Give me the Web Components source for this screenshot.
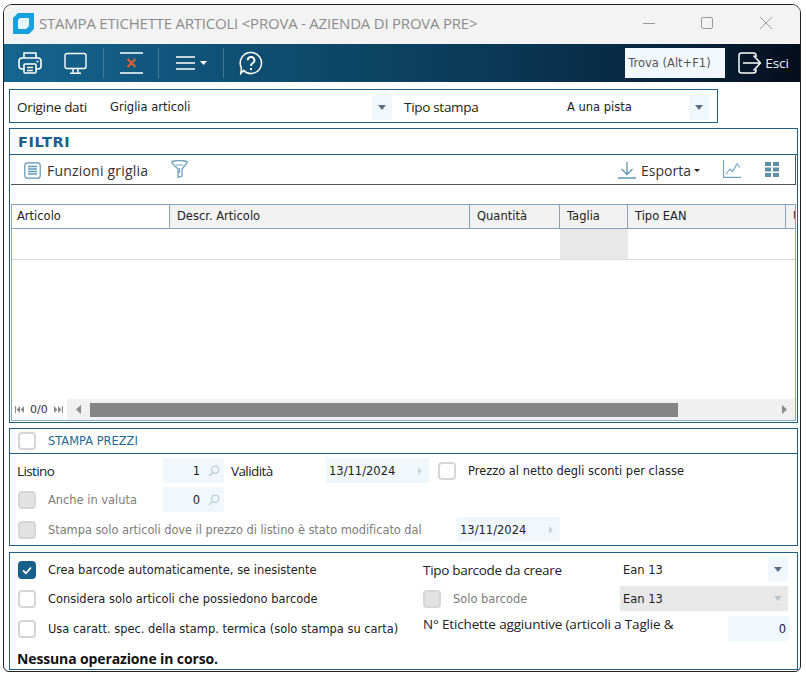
<!DOCTYPE html>
<html>
<head>
<meta charset="utf-8">
<title>Stampa etichette articoli</title>
<style>
  html, body { margin: 0; height: 100%; overflow: hidden; background: #fff; }
  body { font-family: "Open Sans", "Liberation Sans", sans-serif; }
</style>
</head>
<body>
<app-window>
  <title-bar slot="head" text="STAMPA ETICHETTE ARTICOLI <PROVA - AZIENDA DI PROVA PRE>"></title-bar>
  <main-toolbar slot="head"></main-toolbar>

  <group-box style="width:709px;height:34px;padding:6px 0 0 0">
    <form-row h="22">
      <form-label w="97" pad="7">Origine dati</form-label>
      <form-field w="285" arrow="drop">Griglia articoli</form-field>
      <form-label w="172" pad="12">Tipo stampa</form-label>
      <form-field w="145" arrow="drop">A una pista</form-field>
    </form-row>
  </group-box>

  <group-box heading="FILTRI" style="height:295px">
    <grid-toolbar></grid-toolbar>
    <data-grid></data-grid>
  </group-box>

  <group-box check-heading="STAMPA PREZZI" style="height:118px">
    <form-row h="25" top="4">
      <form-label w="153" pad="7" style="letter-spacing:-0.6px">Listino</form-label>
      <form-field w="61" align="right" arrow="search">1</form-field>
      <form-label w="102" pad="7" style="letter-spacing:-0.6px">Validità</form-label>
      <form-field w="103" arrow="next">13/11/2024</form-field>
      <check-field left="9">Prezzo al netto degli sconti per classe</check-field>
    </form-row>
    <form-row h="25" top="4">
      <check-field left="8" w="145" disabled>Anche in valuta</check-field>
      <form-field w="61" align="right" arrow="search">0</form-field>
    </form-row>
    <form-row h="25" top="5">
      <check-field left="8" w="439" disabled style="letter-spacing:-0.05px">Stampa solo articoli dove il prezzo di listino è stato modificato dal</check-field>
      <form-field w="103" arrow="next">13/11/2024</form-field>
    </form-row>
  </group-box>

  <group-box style="height:118px;padding-top:4px">
    <form-row h="25">
      <check-field left="8" w="405" checked>Crea barcode automaticamente, se inesistente</check-field>
      <form-label w="197">Tipo barcode da creare</form-label>
      <form-field w="168" arrow="drop">Ean 13</form-field>
    </form-row>
    <form-row h="25" top="4">
      <check-field left="8" w="405">Considera solo articoli che possiedono barcode</check-field>
      <check-field w="197" disabled>Solo barcode</check-field>
      <form-field w="168" arrow="drop-off" off>Ean 13</form-field>
    </form-row>
    <form-row h="25" top="5">
      <check-field left="8" w="405">Usa caratt. spec. della stamp. termica (solo stampa su carta)</check-field>
      <form-label w="305" up="10" style="letter-spacing:-0.16px">N° Etichette aggiuntive (articoli a Taglie &amp;</form-label>
      <form-field w="61" align="right">0</form-field>
    </form-row>
    <status-line>Nessuna operazione in corso.</status-line>
  </group-box>
</app-window>

<script>
const SEGOE = '"Open Sans", "Noto Sans", sans-serif';
const TAHOMA = '"DejaVu Sans", sans-serif';

class AppWindow extends HTMLElement {
  constructor() {
    super();
    this.attachShadow({ mode: "open" });
    this.shadowRoot.innerHTML = `
      <style>
        :host {
          display: flex;
          flex-direction: column;
          box-sizing: border-box;
          margin: 4px 0 0 3px;
          width: 798px;
          height: 668px;
          border: 1px solid #222;
          border-radius: 9px 9px 6px 6px;
          overflow: hidden;
          background: #fff;
        }
        .body {
          display: flex;
          flex-direction: column;
          gap: 5px;
          padding: 7px 1px 0 5px;
        }
        ::slotted(group-box:last-child) { margin-top: 1px; }
      </style>
      <slot name="head"></slot>
      <div class="body"><slot></slot></div>
    `;
  }
}

class TitleBar extends HTMLElement {
  constructor() {
    super();
    this.attachShadow({ mode: "open" });
  }

  connectedCallback() {
    const text = this.getAttribute("text").replace(/</g, "&lt;").replace(/>/g, "&gt;");
    this.shadowRoot.innerHTML = `
      <style>
        :host {
          display: flex;
          align-items: center;
          box-sizing: border-box;
          height: 39px;
          background: #f3f3f3;
          padding: 0 0 3px 9px;
          font: 15px ${SEGOE};
          color: #8c8c8c;
        }
        .text { margin-left: 5px; flex: 1; white-space: nowrap; letter-spacing: -0.22px; }
        svg { display: block; flex: none; }
        .ctl { width: 58.5px; display: flex; justify-content: center; }
      </style>
      <svg width="21" height="21" viewBox="0 0 21 21">
        <path d="M5 0H21V16L16 21H0V5Z" fill="#17a0dd"/>
        <path d="M7 5H15Q16 5 16 6V13L13 16H6Q5 16 5 15V7Z" fill="#e8f6fd"/>
      </svg>
      <span class="text">${text}</span>
      <span class="ctl"><svg width="14" height="14" viewBox="0 0 14 14"><path d="M1 7.5H13" stroke="#9a9a9a"/></svg></span>
      <span class="ctl"><svg width="14" height="14" viewBox="0 0 14 14"><rect x="1.5" y="1.5" width="11" height="11" rx="1.5" fill="none" stroke="#9a9a9a"/></svg></span>
      <span class="ctl" style="margin-right:5px"><svg width="14" height="14" viewBox="0 0 14 14"><path d="M1 1L13 13M13 1L1 13" stroke="#9a9a9a"/></svg></span>
    `;
  }
}

class MainToolbar extends HTMLElement {
  constructor() {
    super();
    this.attachShadow({ mode: "open" });
    this.shadowRoot.innerHTML = `
      <style>
        :host {
          display: flex;
          align-items: center;
          height: 38px;
          padding-left: 14px;
          background: linear-gradient(90deg, #15658f 0%, #0f4f73 30%, #0a3a57 60%, #08233b 85%, #050d1c 100%);
          color: #fff;
        }
        svg { display: block; flex: none; }
        .sep { width: 1px; height: 30px; background: #3f7c9c; flex: none; }
        .find {
          margin-left: auto;
          box-sizing: border-box;
          width: 100px;
          height: 30px;
          background: #f2f9fe;
          color: #555;
          font: 11.5px/30px ${TAHOMA};
          padding-left: 3px;
          white-space: nowrap;
        }
        .esci { font: 13.5px ${SEGOE}; margin: 0 11px 0 4px; color: #f2f6f8; }
      </style>
      <svg width="24" height="24" viewBox="0 0 24 24" fill="none" stroke="#fff" stroke-width="1.6">
        <path d="M6 7V2H18V7"/>
        <rect x="1" y="7" width="22" height="11" rx="3"/>
        <rect x="6" y="13" width="12" height="9" rx="1" fill="#13597e"/>
        <path d="M9 16.5H15M9 19.5H15" stroke-width="1.4"/>
        <path d="M18.5 10.5H20.5" stroke-width="1.4"/>
      </svg>
      <svg style="margin-left:22px" width="23" height="23" viewBox="0 0 23 23" fill="none" stroke="#fff" stroke-width="1.4">
        <rect x="1" y="1.5" width="21" height="15" rx="2"/>
        <path d="M9 17V21M14 17V21M6 21.2H17"/>
      </svg>
      <span class="sep" style="margin-left:16px"></span>
      <svg style="margin-left:16px" width="23" height="24" viewBox="0 0 23 24" fill="none">
        <path d="M0 2H23M0 22H23" stroke="#fff" stroke-width="1.4"/>
        <path d="M7.5 8L15.5 16M15.5 8L7.5 16" stroke="#e2612c" stroke-width="1.8"/>
      </svg>
      <span class="sep" style="margin-left:15px"></span>
      <svg style="margin-left:17px" width="32" height="16" viewBox="0 0 32 16" fill="none">
        <path d="M0 2H19M0 8H19M0 14H19" stroke="#fff" stroke-width="1.4"/>
        <path d="M24 6H31L27.5 10Z" fill="#fff"/>
      </svg>
      <span class="sep" style="margin-left:15px"></span>
      <svg style="margin-left:15px" width="24" height="24" viewBox="0 0 24 24" fill="none" stroke="#fff" stroke-width="1.5">
        <path d="M12 1.5A10.5 10.5 0 1 1 4.5 19.4L1.8 22.4L2.4 16.8A10.5 10.5 0 0 1 12 1.5Z"/>
        <path d="M8.8 9.3A3.3 3.3 0 1 1 13.6 12.2C12.4 12.9 12 13.5 12 15" stroke-width="1.9"/>
        <path d="M12 17V19" stroke-width="1.9"/>
      </svg>
      <div class="find">Trova (Alt+F1)</div>
      <svg style="margin-left:13px" width="23" height="22" viewBox="0 0 23 22" fill="none" stroke="#fff" stroke-width="1.5">
        <path d="M18 5V3.5Q18 1 15.5 1H3.5Q1 1 1 3.5V18.5Q1 21 3.5 21H15.5Q18 21 18 18.5V17"/>
        <path d="M5 11H22M15.5 3.5L22.5 11L15.5 18.5"/>
      </svg>
      <span class="esci">Esci</span>
    `;
  }
}

class GroupBox extends HTMLElement {
  constructor() {
    super();
    this.attachShadow({ mode: "open" });
  }

  connectedCallback() {
    const heading = this.getAttribute("heading");
    const checkHeading = this.getAttribute("check-heading");
    let head = "";
    if (heading) head = `<div class="head big">${heading}</div>`;
    if (checkHeading) {
      head = `<div class="head small"><check-field left="8" label-color="#1f6a8f">${checkHeading}</check-field></div>`;
    }
    this.shadowRoot.innerHTML = `
      <style>
        :host {
          display: block;
          box-sizing: border-box;
          width: 789px;
          border: 1px solid #1f5f7f;
        }
        .head { box-sizing: border-box; border-bottom: 1px solid #1f5f7f; }
        .big {
          height: 26px;
          font: bold 14.5px/26px ${TAHOMA};
          letter-spacing: 0.6px;
          color: #1a6088;
          padding-left: 8px;
        }
        .small { display: flex; align-items: center; height: 25px; }
      </style>
      ${head}
      <slot></slot>
    `;
  }
}

class FormRow extends HTMLElement {
  constructor() {
    super();
    this.attachShadow({ mode: "open" });
    this.shadowRoot.innerHTML = `
      <style>
        :host { display: flex; align-items: center; }
      </style>
      <slot></slot>
    `;
  }

  connectedCallback() {
    this.style.height = this.getAttribute("h") + "px";
    this.style.marginTop = (this.getAttribute("top") || 0) + "px";
  }
}

class FormLabel extends HTMLElement {
  constructor() {
    super();
    this.attachShadow({ mode: "open" });
    this.shadowRoot.innerHTML = `
      <style>
        :host {
          display: block;
          flex: none;
          box-sizing: border-box;
          font: 13.5px ${SEGOE};
          letter-spacing: -0.3px;
          color: #222;
          white-space: nowrap;
        }
      </style>
      <slot></slot>
    `;
  }

  connectedCallback() {
    this.style.width = this.getAttribute("w") + "px";
    this.style.paddingLeft = (this.getAttribute("pad") || 0) + "px";
    if (this.hasAttribute("up")) this.style.marginBottom = this.getAttribute("up") + "px";
  }
}

const ARROWS = {
  search: `<svg class="ico" style="right:4px" width="12" height="12" viewBox="0 0 12 12" fill="none" stroke="#b9c6d0" stroke-width="1.1"><circle cx="7.2" cy="4.8" r="3.6"/><path d="M4.5 7.5L1 11"/></svg>`,
  next: `<svg class="ico" style="right:7px" width="4" height="8" viewBox="0 0 4 8"><path d="M0 0L4 4L0 8Z" fill="#c9d3da"/></svg>`,
  drop: `<span class="btn"><svg width="8" height="5" viewBox="0 0 8 5"><path d="M0 0H8L4 5Z" fill="#5b6f80"/></svg></span>`,
  "drop-off": `<span class="btn off"><svg width="8" height="5" viewBox="0 0 8 5"><path d="M0 0H8L4 5Z" fill="#bcc4ca"/></svg></span>`,
};

class FormField extends HTMLElement {
  constructor() {
    super();
    this.attachShadow({ mode: "open" });
  }

  connectedCallback() {
    const arrow = this.getAttribute("arrow");
    const right = this.getAttribute("align") === "right";
    const dropdown = arrow && arrow.startsWith("drop");
    const off = this.hasAttribute("off");
    let padRight = 3;
    if (arrow === "search") padRight = 24;
    this.style.width = this.getAttribute("w") + "px";
    this.shadowRoot.innerHTML = `
      <style>
        :host {
          display: flex;
          flex: none;
          position: relative;
          box-sizing: border-box;
          height: 25px;
          align-items: center;
          justify-content: ${right ? "flex-end" : "flex-start"};
          background: ${off ? "#e8e8e8" : dropdown ? "transparent" : "#f0f8fe"};
          font: 11.5px ${TAHOMA};
          color: #222;
          padding: 0 ${padRight}px 0 3px;
          white-space: nowrap;
        }
        .ico { position: absolute; top: 50%; transform: translateY(-50%); display: block; }
        .btn {
          position: absolute;
          right: 0;
          top: 0;
          bottom: 0;
          width: 20px;
          display: flex;
          align-items: center;
          justify-content: center;
          background: #f0f8fe;
        }
        .btn.off { background: transparent; }
      </style>
      <slot></slot>
      ${arrow ? ARROWS[arrow] : ""}
    `;
  }
}

class CheckField extends HTMLElement {
  constructor() {
    super();
    this.attachShadow({ mode: "open" });
  }

  connectedCallback() {
    const checked = this.hasAttribute("checked");
    const disabled = this.hasAttribute("disabled");
    const w = this.getAttribute("w");
    if (w) this.style.width = w + "px";
    this.style.marginLeft = (this.getAttribute("left") || 0) + "px";
    const tick = checked
      ? `<svg width="18" height="18" viewBox="0 0 18 18"><path d="M5 9.5L8 12.2L13 6.5" fill="none" stroke="#fff" stroke-width="1.7"/></svg>`
      : "";
    this.shadowRoot.innerHTML = `
      <style>
        :host {
          display: flex;
          flex: none;
          align-items: center;
          box-sizing: border-box;
          white-space: nowrap;
          font: 11.44px ${TAHOMA};
          color: ${this.getAttribute("label-color") || (disabled ? "#7d7d7d" : "#222")};
        }
        .box {
          flex: none;
          box-sizing: border-box;
          width: 18px;
          height: 18px;
          margin-right: 12px;
          border-radius: 4px;
          border: 2px solid ${checked ? "#17608a" : "#d6d6d6"};
          background: ${checked ? "#17608a" : disabled ? "#e2e2e2" : "#fff"};
          position: relative;
        }
        svg { position: absolute; left: -2px; top: -2px; display: block; }
      </style>
      <span class="box">${tick}</span>
      <slot></slot>
    `;
  }
}

class StatusLine extends HTMLElement {
  constructor() {
    super();
    this.attachShadow({ mode: "open" });
    this.shadowRoot.innerHTML = `
      <style>
        :host {
          display: block;
          margin: 10px 0 0 7px;
          font: bold 14px/16px ${SEGOE};
          letter-spacing: -0.13px;
          color: #111;
          white-space: nowrap;
        }
      </style>
      <slot></slot>
    `;
  }
}

class GridToolbar extends HTMLElement {
  constructor() {
    super();
    this.attachShadow({ mode: "open" });
    this.shadowRoot.innerHTML = `
      <style>
        :host {
          display: flex;
          align-items: center;
          box-sizing: border-box;
          height: 30px;
          margin: 0 1px 0 1px;
          border-right: 1px solid #555;
          border-bottom: 1px solid #555;
          font: 14px ${SEGOE};
          letter-spacing: 0.2px;
          color: #333;
          padding-top: 1px;
        }
        svg { display: block; flex: none; }
        .caret { width: 0; height: 0; border: 3px solid transparent; border-top: 3px solid #222; border-bottom: 0; margin-left: 3px; }
      </style>
      <svg style="margin-left:13px" width="17" height="17" viewBox="0 0 17 17" fill="none" stroke="#5f97b3" stroke-width="1.2">
        <rect x="0.8" y="0.8" width="15.4" height="15.4" rx="2.5"/>
        <path d="M4 4.5H13M4 7H13M4 9.5H13M4 12H13" stroke-width="1.4"/>
      </svg>
      <span style="margin-left:6px">Funzioni griglia</span>
      <svg style="margin-left:23px;margin-top:-3px" width="17" height="18" viewBox="0 0 17 18" fill="none" stroke="#6fa3bd" stroke-width="1.3">
        <path d="M1 1.5Q8.5 -0.5 16 1.5V3L11 9V16L7 17.5V9L1 3Z"/>
        <path d="M5 5H12M8.5 8V13" stroke-width="1.2"/>
      </svg>
      <svg style="margin-left:auto" width="18" height="17" viewBox="0 0 18 17" fill="none" stroke="#5f97b3" stroke-width="1.3">
        <path d="M9 0V12M3.5 7L9 12.5L14.5 7M0 16H18"/>
      </svg>
      <span style="margin-left:5px;letter-spacing:0">Esporta</span>
      <span class="caret"></span>
      <svg style="margin-left:23px;margin-top:-2px" width="18" height="18" viewBox="0 0 18 18" fill="none" stroke="#6fa3bd" stroke-width="1.1">
        <path d="M0.6 0V17.4H18"/>
        <path d="M3 14L7 9L9.5 11.5L14 4L17 7.5"/>
      </svg>
      <svg style="margin:-2px 16px 0 24px" width="14" height="15" viewBox="0 0 14 15" fill="#5f8fa8">
        <rect x="0" y="0" width="6" height="4"/><rect x="8" y="0" width="6" height="4"/>
        <rect x="0" y="5.5" width="6" height="4"/><rect x="8" y="5.5" width="6" height="4"/>
        <rect x="0" y="11" width="6" height="4"/><rect x="8" y="11" width="6" height="4"/>
      </svg>
    `;
  }
}

class DataGrid extends HTMLElement {
  constructor() {
    super();
    this.attachShadow({ mode: "open" });
    const cols = [
      ["Articolo", 158, "#fff"],
      ["Descr. Articolo", 300],
      ["Quantità", 90],
      ["Taglia", 68],
      ["Tipo EAN", 158],
      ["Um", 10],
    ];
    const head = cols
      .map(([t, w, bg]) => `<div class="th" style="width:${w}px;${bg ? "background:" + bg : ""}">${t}</div>`)
      .join("");
    const row = cols
      .map(([t, w]) => `<div class="td" style="width:${w}px;${t === "Taglia" ? "background:#e9e9e9" : ""}"></div>`)
      .join("");
    this.shadowRoot.innerHTML = `
      <style>
        :host {
          display: flex;
          flex-direction: column;
          box-sizing: border-box;
          height: 217px;
          margin: 19px 1px 0 1px;
          border: 1px solid #8aa3bb;
          border-bottom: 1px solid #8fb0c0;
          font: 11.5px ${TAHOMA};
          color: #222;
          overflow: hidden;
        }
        .head { display: flex; height: 24px; flex: none; border-bottom: 1px solid #8aa3bb; background: #f2f2f2; box-sizing: border-box; }
        .th {
          flex: none;
          box-sizing: border-box;
          padding-left: 7px;
          line-height: 22px;
          border-right: 1px solid #8aa3bb;
          white-space: nowrap;
          overflow: hidden;
        }
        .th:first-child { padding-left: 5px; }
        .th:last-child { border-right: 0; }
        .row { display: flex; height: 31px; flex: none; border-bottom: 1px solid #dcdcdc; box-sizing: border-box; }
        .td { flex: none; box-sizing: border-box; }
        .fill { flex: 1; }
        .foot { display: flex; align-items: center; height: 21px; flex: none; background: #f0f0f0; }
        .pager { display: flex; align-items: center; gap: 6px; width: 55px; height: 100%; flex: none; background: #fff; padding-left: 3px; box-sizing: border-box; color: #333; font-size: 11px; }
        .thumb { height: 14px; width: 588px; background: #858585; margin-left: 9px; flex: none; }
        svg { display: block; flex: none; }
      </style>
      <div class="head">${head}</div>
      <div class="row">${row}</div>
      <div class="fill"></div>
      <div class="foot">
        <div class="pager">
          <svg width="9" height="7" viewBox="0 0 9 7" fill="#8a8a8a"><rect width="1" height="7"/><path d="M5 0V7L1.5 3.5ZM9 0V7L5.5 3.5Z"/></svg>
          <span>0/0</span>
          <svg width="9" height="7" viewBox="0 0 9 7" fill="#8a8a8a"><path d="M0 0V7L3.5 3.5ZM4 0V7L7.5 3.5Z"/><rect x="8" width="1" height="7"/></svg>
        </div>
        <svg style="margin-left:9px" width="5" height="9" viewBox="0 0 5 9"><path d="M5 0V9L0 4.5Z" fill="#8a8a8a"/></svg>
        <div class="thumb"></div>
        <svg style="margin-left:104px" width="5" height="9" viewBox="0 0 5 9"><path d="M0 0V9L5 4.5Z" fill="#8a8a8a"/></svg>
      </div>
    `;
  }
}

customElements.define("app-window", AppWindow);
customElements.define("title-bar", TitleBar);
customElements.define("main-toolbar", MainToolbar);
customElements.define("group-box", GroupBox);
customElements.define("form-row", FormRow);
customElements.define("form-label", FormLabel);
customElements.define("form-field", FormField);
customElements.define("check-field", CheckField);
customElements.define("status-line", StatusLine);
customElements.define("grid-toolbar", GridToolbar);
customElements.define("data-grid", DataGrid);
</script>
</body>
</html>
